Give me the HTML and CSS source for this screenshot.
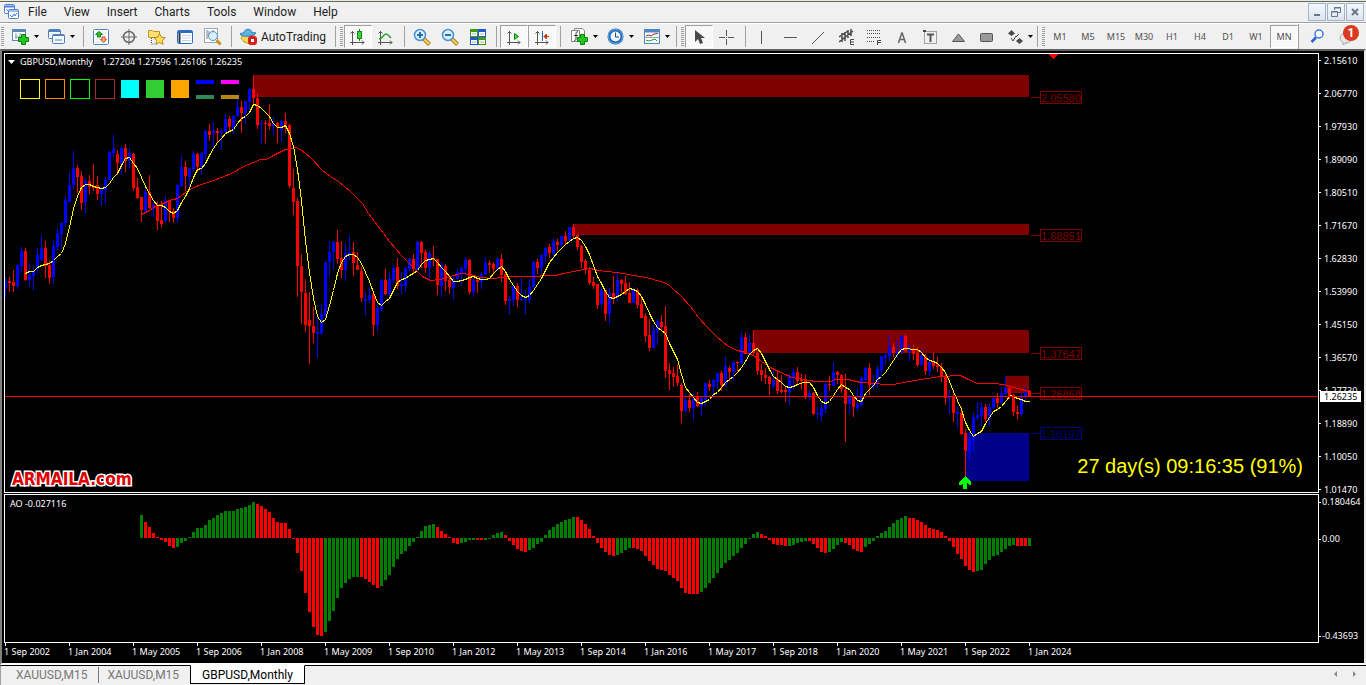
FILE: index.html
```html
<!DOCTYPE html>
<html lang="en">
<head>
<meta charset="utf-8">
<title>GBPUSD,Monthly</title>
<link rel="stylesheet" href="styles.css">
</head>
<body>
<header class="menubar">
  <svg class="menubar-logo" width="16" height="16" viewBox="0 0 16 16" fill="#fff" stroke="#4a80d8"><rect x=".5" y=".5" width="10" height="9" rx="1"/><path d="M1 2.500h9" stroke-width="2"/><rect x="4.500" y="5.500" width="10" height="9" rx="1"/><path d="M5 7h9M6 11l2 2 2-3 1 2 2-3M2 5l2 2"/></svg>
  <nav class="menus">
    <button>File</button><button>View</button><button>Insert</button><button>Charts</button><button>Tools</button><button>Window</button><button>Help</button>
  </nav>
  <div class="window-buttons">
    <button aria-label="Minimize"><svg width="12" height="12" viewBox="0 0 12 12"><path d="M3 8h6v2H3z" fill="#66788a"/></svg></button>
    <button aria-label="Restore"><svg width="12" height="12" viewBox="0 0 12 12" fill="none" stroke="#66788a"><path d="M4.500 4V1.500h6v5H8M4 2h7"/><path d="M1.500 5.500h6v5h-6zM1 6h7"/></svg></button>
    <button aria-label="Close"><svg width="12" height="12" viewBox="0 0 12 12"><path d="M3 3l6 6M9 3l-6 6" stroke="#66788a" stroke-width="2"/></svg></button>
  </div>
</header>

<div class="toolbar">
  <span class="grip"></span>
  <div class="group group-files">
    <button class="tool tool-menu" aria-label="New chart"><svg width="18" height="18" viewBox="0 0 18 18"><rect x=".5" y="1.500" width="13" height="11" fill="#fff" stroke="#5c88b4"/><path d="M1 3h12" stroke="#5c88b4" stroke-width="2"/><path d="M3 9h6M4 5v6M8 5v5" stroke="#7c98b4"/><path d="M9.500 6.500h4v3h3v4h-3v3h-4v-3h-3v-4h3z" fill="#1fc81f" stroke="#0a820a"/></svg><i class="caret"></i></button>
    <button class="tool tool-menu" aria-label="Profiles"><svg width="18" height="18" viewBox="0 0 18 18" fill="#f4f9ff" stroke="#4f7fb8"><rect x=".5" y="1.500" width="12" height="9" rx="1"/><path d="M1 3h11" stroke-width="2"/><rect x="4.500" y="6.500" width="12" height="9" rx="1"/><path d="M5 7.500h11M7 12h7"/></svg><i class="caret"></i></button>
  </div>
  <span class="sep"></span>
  <div class="group">
    <button class="tool" aria-label="Market watch"><svg width="16" height="16" viewBox="0 0 16 16"><rect x=".5" y=".5" width="15" height="15" rx="1" fill="#fff" stroke="#4f86c0"/><path d="M3 4h10M3 7h10M3 10h10M3 13h10" stroke="#cfe0ee"/><path d="M6 2.500l3.500 3H7.500V8h-3V5.500h-2z" fill="#30c030" stroke="#118011"/><path d="M10.500 13.500l3-3H12V8H9v2.500H7.500z" fill="#ffb090" stroke="#e04818"/></svg></button>
    <button class="tool" aria-label="Data window"><svg width="16" height="16" viewBox="0 0 16 16" fill="none" stroke="#666"><circle cx="8" cy="8" r="5.500" stroke-width="1.500"/><path d="M8 0v16M0 8h16"/></svg></button>
    <button class="tool" aria-label="Navigator"><svg width="18" height="16" viewBox="0 0 18 16"><path d="M.5 1.500h4l1 1h6v6H.5z" fill="#ffe070" stroke="#c49420"/><path d="M3.500 9v6h4" fill="none" stroke="#555" stroke-dasharray="1 1"/><path d="M11.500 4.500l1.800 3.700 4 .5-3 2.700.8 4-3.600-2-3.600 2 .8-4-3-2.700 4-.5z" fill="#ffe060" stroke="#b88a18"/></svg></button>
    <button class="tool" aria-label="Terminal"><svg width="16" height="16" viewBox="0 0 16 16"><rect x=".5" y="1.500" width="15" height="13" rx="1" fill="#fff" stroke="#2a6cc8"/><path d="M1 3h14" stroke="#2a6cc8" stroke-width="2"/><path d="M2.500 4v10" stroke="#334" stroke-width="2"/><path d="M5 6.500h9M5 9h9M5 11.500h9" stroke="#c3d3e6"/></svg></button>
    <button class="tool" aria-label="Strategy tester"><svg width="18" height="18" viewBox="0 0 18 18"><rect x=".5" y=".5" width="13" height="14" fill="#fff" stroke="#9aa8b4"/><path d="M3 2v9M5 3v4M9 2v4" stroke="#678"/><circle cx="9" cy="8" r="4.500" fill="#d4ecfb" fill-opacity=".85" stroke="#5790bd"/><path d="M12.500 12l4 4.500" stroke="#c8951c" stroke-width="3"/></svg></button>
  </div>
  <span class="sep"></span>
  <button class="tool tool-text"><svg width="17" height="17" viewBox="0 0 17 17"><path d="M3 7h11l1 6-5 3-6-2-3-4z" fill="#f8d850" stroke="#c8981c"/><path d="M4 5c0-5 8-5 8 0 2-1 4 0 4 0-1 3-14 5-16 1 1-1 3-1 4-1z" fill="#5fb4e4" stroke="#2a7cac"/><rect x="8" y="8" width="9" height="9" rx="3" fill="#d42020"/><rect x="11" y="11" width="3" height="3" fill="#fff"/></svg>AutoTrading</button>
  <span class="sep"></span><span class="grip"></span>
  <div class="group">
    <button class="tool pressed" aria-label="Candlesticks"><svg width="16" height="16" viewBox="0 0 16 16"><path d="M2.500 2v14M0 13.500h14M.5 4.500l2-2 2 2M12 11.500l2 2-2 2" fill="none" stroke="#555"/><path d="M9.500 0v12" stroke="#118a11"/><rect x="7.500" y="2.500" width="4" height="7" fill="#39d439" stroke="#118a11"/></svg></button>
    <button class="tool" aria-label="Line chart"><svg width="16" height="16" viewBox="0 0 16 16" fill="none" stroke="#555"><path d="M2.500 2v14M0 13.500h14M.5 4.500l2-2 2 2M12 11.500l2 2-2 2"/><path d="M1 10c4 0 4-5 7-5 2 0 3 2 5 4" stroke="#2aa52a" stroke-width="1.500"/></svg></button>
  </div>
  <span class="sep"></span>
  <div class="group">
    <button class="tool" aria-label="Zoom in"><svg width="18" height="18" viewBox="0 0 18 18"><path d="M10.500 10.500l6 6" stroke="#a87c18" stroke-width="4"/><path d="M10.500 10.500l5.500 5.500" stroke="#f8d860" stroke-width="2"/><circle cx="7" cy="7" r="5.500" fill="#d8efff" stroke="#4b93cc" stroke-width="1.500"/><path d="M4 7h6M7 4v6" stroke="#2a6cb0" stroke-width="2"/></svg></button>
    <button class="tool" aria-label="Zoom out"><svg width="18" height="18" viewBox="0 0 18 18"><path d="M10.500 10.500l6 6" stroke="#a87c18" stroke-width="4"/><path d="M10.500 10.500l5.500 5.500" stroke="#f8d860" stroke-width="2"/><circle cx="7" cy="7" r="5.500" fill="#d8efff" stroke="#4b93cc" stroke-width="1.500"/><path d="M4 7h6" stroke="#2a6cb0" stroke-width="2"/></svg></button>
    <button class="tool" aria-label="Tile windows"><svg width="16" height="16" viewBox="0 0 16 16"><path d="M0 0h8v8H0zM8 8h8v8H8z" fill="#3f9a18"/><path d="M8 0h8v8H8zM0 8h8v8H0z" fill="#2458d0"/><path d="M1 3h6v4H1zM9 3h6v4H9zM1 11h6v4H1zM9 11h6v4H9z" fill="#fff"/><path d="M2 5h4M10 5h4M2 13h4M10 13h4" stroke="#9cc0a0"/></svg></button>
  </div>
  <span class="sep"></span>
  <div class="group">
    <button class="tool pressed" aria-label="Auto scroll"><svg width="16" height="16" viewBox="0 0 16 16" fill="none" stroke="#555"><path d="M3.500 2v14M1 13.500h13M1.500 4.500l2-2 2 2M12 11.500l2 2-2 2"/><path d="M8.500 4.500v6l4-3z" fill="#3fd83f" stroke="#118a11"/></svg></button>
    <button class="tool pressed" aria-label="Chart shift"><svg width="16" height="16" viewBox="0 0 16 16" fill="none" stroke="#555"><path d="M3.500 2v14M1 13.500h13M1.500 4.500l2-2 2 2M12 11.500l2 2-2 2"/><path d="M8.500 2v10" stroke="#1c68a8"/><path d="M10 7.500h5M12.500 5L10 7.500l2.500 2.500z" fill="#c03808" stroke="#c03808"/></svg></button>
  </div>
  <span class="sep"></span>
  <div class="group">
    <button class="tool tool-menu" aria-label="Indicators"><svg width="18" height="18" viewBox="0 0 18 18"><path d="M3.500.5h8l2 2v11h-10z" fill="#fff" stroke="#888"/><path d="M.5 2.500h8v11h-8z" fill="#fff" stroke="#888"/><path d="M7 4c-2-1-2 1-2 3v4c0 1-1 2-2 1M3 7.500h4" fill="none" stroke="#333"/><path d="M9.500 6.500h4v3h3v4h-3v3h-4v-3h-3v-4h3z" fill="#1fc81f" stroke="#0a820a"/></svg><i class="caret"></i></button>
    <button class="tool tool-menu" aria-label="Periods"><svg width="18" height="18" viewBox="0 0 18 18"><circle cx="8.500" cy="8.500" r="6.500" fill="#eef6fd" stroke="#1c62b4" stroke-width="3"/><circle cx="8.500" cy="8.500" r="7" fill="none" stroke="#6fb2ea"/><path d="M8.500 4.500v4.500h3.500" fill="none" stroke="#345"/></svg><i class="caret"></i></button>
    <button class="tool tool-menu" aria-label="Templates"><svg width="18" height="18" viewBox="0 0 18 18"><rect x="1.500" y="1.500" width="15" height="14" fill="#fff" stroke="#4f86c4"/><path d="M1 3h16" stroke="#4f86c4" stroke-width="3"/><path d="M2 9.500h14" stroke="#8ab"/><path d="M3 8l3-1 2 1 3-2 4-.500" fill="none" stroke="#b02020"/><path d="M3 12l3 1 3-1 3-1 2 2" fill="none" stroke="#2a9a2a"/></svg><i class="caret"></i></button>
  </div>
  <span class="sep"></span><span class="grip"></span>
  <div class="group">
    <button class="tool pressed" aria-label="Cursor"><svg width="16" height="16" viewBox="0 0 16 16"><path d="M4 1v12l3-3 2 5 3-1-2-5h4z" fill="#4a4a4a"/></svg></button>
    <button class="tool" aria-label="Crosshair"><svg width="16" height="16" viewBox="0 0 16 16"><path d="M7.500 1v6M7.500 10v6M0 8.500h6M9 8.500h6M7 8.500h1" stroke="#555"/></svg></button>
  </div>
  <span class="sep"></span>
  <div class="group">
    <button class="tool" aria-label="Vertical line"><svg width="16" height="16" viewBox="0 0 16 16"><path d="M6.500 2v13" stroke="#555"/></svg></button>
    <button class="tool" aria-label="Horizontal line"><svg width="16" height="16" viewBox="0 0 16 16"><path d="M1 8.500h13" stroke="#555"/></svg></button>
    <button class="tool" aria-label="Trendline"><svg width="16" height="16" viewBox="0 0 16 16"><path d="M1 15L13 3" stroke="#555"/></svg></button>
    <button class="tool" aria-label="Channel"><svg width="16" height="18" viewBox="0 0 16 18" fill="none" stroke="#4a4a4a"><path d="M0 9L9 3M0 14l14-11M3 5v9M6 4v9M9 2v8M12 1v7" stroke-width="1.500"/><path d="M15 11.500h-3.500v5H15M12 14h3"/></svg></button>
    <button class="tool" aria-label="Fibonacci"><svg width="16" height="18" viewBox="0 0 16 18" fill="none" stroke="#4a4a4a"><path d="M0 2.500h14M0 5.500h14M0 9.500h14M0 13.500h8" stroke-dasharray="1 1"/><path d="M14 12.500h-3.500V17M11 14.500h3"/></svg></button>
    <button class="tool" aria-label="Text"><svg width="16" height="16" viewBox="0 0 16 16"><path d="M3.500 14L6.800 4h.4l3.300 10M5 10.500h4" fill="none" stroke="#666" stroke-width="1.500"/></svg></button>
    <button class="tool" aria-label="Text label"><svg width="16" height="16" viewBox="0 0 16 16" fill="none" stroke="#555"><path d="M1.500 2.500h12v12h-12z" stroke-dasharray="1 1"/><path d="M0 1h3v2H0z" fill="#444" stroke="none"/><path d="M4 5.500h7M7.500 5v8" stroke-width="2"/></svg></button>
    <button class="tool" aria-label="Triangle"><svg width="16" height="16" viewBox="0 0 16 16"><path d="M1.500 12.500L7.500 5l6 7.500z" fill="#999" stroke="#555"/></svg></button>
    <button class="tool" aria-label="Rectangle"><svg width="16" height="16" viewBox="0 0 16 16"><rect x="1.500" y="4.500" width="12" height="8" rx="1" fill="#999" stroke="#555"/></svg></button>
    <button class="tool tool-menu tool-arrows" aria-label="Arrows"><svg width="16" height="16" viewBox="0 0 16 16" fill="#4a4a4a"><path d="M3.500 1L7 4.500 3.500 7 0 4.500zM11.500 9l3.500 3-3.500 3L8 12z"/><path d="M3 9l2 3 3-5M8 8l3-3" fill="none" stroke="#4a4a4a"/></svg><i class="caret"></i></button>
  </div>
  <span class="sep"></span><span class="grip"></span>
  <div class="group group-periods">
    <button class="tool">M1</button><button class="tool">M5</button><button class="tool">M15</button><button class="tool">M30</button><button class="tool">H1</button><button class="tool">H4</button><button class="tool">D1</button><button class="tool">W1</button><button class="tool pressed">MN</button>
  </div>
  <div class="group group-end">
    <button class="tool" aria-label="Search"><svg width="16" height="16" viewBox="0 0 16 16" fill="none"><path d="M6 9.500L1.500 14" stroke="#2a62d0" stroke-width="2.500"/><circle cx="9" cy="6" r="4" fill="#fff" stroke="#3f78dc" stroke-width="1.500"/></svg></button>
    <button class="tool messages" aria-label="Messages"><svg width="20" height="20" viewBox="0 0 20 20"><ellipse cx="8" cy="12" rx="6" ry="5" fill="#e4e6ea" stroke="#a4a8ae"/><path d="M5 16v3l4-3" fill="#e4e6ea" stroke="#a4a8ae"/></svg><span class="badge">1</span></button>
  </div>
</div>

<main class="workspace">
  <section class="pane price-pane">
    <svg class="plot" id="price-plot" shape-rendering="crispEdges"></svg>
    <div class="chart-title"><i class="caret"></i><span>GBPUSD,Monthly</span><span>1.27204 1.27596 1.26106 1.26235</span></div>
    <div class="watermark">ARMAILA.com</div>
    <div class="countdown">27 day(s) 09:16:35 (91%)</div>
  </section>
  <aside class="price-axis">
    <ul>
      <li>2.15610</li><li>2.06770</li><li>1.97930</li><li>1.89090</li><li>1.80510</li><li>1.71670</li><li>1.62830</li><li>1.53990</li><li>1.45150</li><li>1.36570</li><li>1.27730</li><li>1.18890</li><li>1.10050</li><li>1.01470</li>
    </ul>
    <span class="current-price">1.26235</span>
  </aside>
  <section class="pane ao-pane">
    <svg class="plot" id="ao-plot" shape-rendering="crispEdges"></svg>
    <div class="ao-title">AO -0.027116</div>
  </section>
  <ul class="ao-axis"><li>0.180464</li><li>0.00</li><li>-0.43693</li></ul>
  <ol class="time-axis">
    <li>1 Sep 2002</li><li>1 Jan 2004</li><li>1 May 2005</li><li>1 Sep 2006</li><li>1 Jan 2008</li><li>1 May 2009</li><li>1 Sep 2010</li><li>1 Jan 2012</li><li>1 May 2013</li><li>1 Sep 2014</li><li>1 Jan 2016</li><li>1 May 2017</li><li>1 Sep 2018</li><li>1 Jan 2020</li><li>1 May 2021</li><li>1 Sep 2022</li><li>1 Jan 2024</li>
  </ol>
</main>

<footer class="tabs">
  <button class="tab">XAUUSD,M15</button><button class="tab">XAUUSD,M15</button><button class="tab active">GBPUSD,Monthly</button>
  <div class="tab-scroll">
    <button aria-label="Scroll left"><svg width="5" height="8" viewBox="0 0 5 8"><path d="M4 1v6L1 4z" fill="#888"/></svg></button>
    <button aria-label="Scroll right"><svg width="5" height="8" viewBox="0 0 5 8"><path d="M1 1v6l3-3z" fill="#888"/></svg></button>
  </div>
</footer>
<script src="chart.js"></script>
</body>
</html>
```

FILE: styles.css
```css
* { box-sizing: border-box; }
body {
  margin: 0;
  height: 100vh;
  display: flex;
  flex-direction: column;
  overflow: hidden;
  background: #f0f0f0;
  color: #1e1e1e;
  font: 12px/16px Roboto, "Noto Sans", sans-serif;
}
button {
  margin: 0;
  padding: 0;
  border: 0;
  background: none;
  color: inherit;
  font: inherit;
}
ul, ol { margin: 0; padding: 0; list-style: none; }
svg { flex: none; }

.menubar {
  flex: none;
  display: flex;
  align-items: center;
  height: 23px;
  padding: 2px 2px 1px 4px;
  border-bottom: 1px solid #a0a0a0;
  background: linear-gradient(#e4ecd8 0 1px, #666 1px 2px, #f0f0f0 2px);
}
.menus { display: flex; flex: 1; }
.menus button { padding: 0 9px 0 8px; }
.window-buttons { display: flex; gap: 1px; }
.window-buttons button {
  display: grid;
  place-items: center;
  width: 18px;
  height: 18px;
  border: 1px solid #a3b4c6;
  background: linear-gradient(#f4f8fc, #dbe5ef);
}

.toolbar {
  flex: none;
  display: flex;
  align-items: center;
  height: 26px;
  border-top: 1px solid #fff;
}
.grip {
  flex: none;
  width: 3px;
  height: 19px;
  margin: 0 1px;
  background: repeating-linear-gradient(#a0a0a0 0 1px, #f0f0f0 1px 2px);
}
.sep {
  flex: none;
  width: 1px;
  height: 21px;
  margin: 0 3px 0 4px;
  background: #a0a0a0;
}
.group { display: flex; }
.group-files { padding-right: 2px; }
.tool {
  display: flex;
  align-items: center;
  justify-content: center;
  width: 28px;
  height: 23px;
}
.tool.pressed {
  border: 1px solid;
  border-color: #a0a0a0 #fff #fff #a0a0a0;
  background: #f8f8f8;
}
.tool-menu { justify-content: flex-start; gap: 4px; width: 36px; padding-left: 7px; }
.tool-arrows { width: 32px; }
.tool-text { gap: 4px; width: 96px; }
.caret {
  flex: none;
  width: 5px;
  height: 3px;
  background: #000;
  clip-path: polygon(0 0, 100% 0, 50% 100%);
}
.group-periods { color: #505050; font: 9px/12px "Noto Sans", sans-serif; }
.group-end {
  flex: 1;
  justify-content: space-between;
  height: 25px;
  border-left: 1px solid #a0a0a0;
  padding: 0 4px 0 5px;
}
.messages { position: relative; }
.badge {
  position: absolute;
  top: 1px;
  right: 3px;
  width: 16px;
  height: 16px;
  border-radius: 8px;
  background: #dc3a20;
  color: #fff;
  font-weight: bold;
}

.workspace {
  flex: 1;
  min-height: 0;
  display: grid;
  grid-template-columns: 1fr 45px;
  grid-template-rows: 1fr 149px 19px;
  row-gap: 1px;
  padding: 2px 0 0 2px;
  border: 2px solid;
  border-color: #606060 #e8e8e8 #fff #808080;
  background: #000;
  color: #fff;
  font: 9px/12px "Noto Sans", sans-serif;
}
.pane {
  position: relative;
  min-width: 0;
  min-height: 0;
  overflow: hidden;
  border: 1px solid #fff;
}
.plot { display: block; position: absolute; width: 100%; height: 100%; }
.zone-label { font: 11px "Liberation Sans", sans-serif; }
.chart-title {
  position: absolute;
  top: 2px;
  left: 3px;
  display: flex;
  align-items: center;
  gap: 9px;
}
.chart-title .caret { width: 7px; height: 4px; margin-right: -4px; background: #fff; }
.watermark {
  position: absolute;
  left: 7px;
  bottom: 3px;
  color: #e00000;
  font: bold 17px/20px "DejaVu Sans Condensed", "DejaVu Sans", sans-serif;
  -webkit-text-stroke: 3px #fff;
  paint-order: stroke fill;
}
.countdown {
  position: absolute;
  right: 15px;
  bottom: 14px;
  color: #ff0;
  font: 20px/24px "Liberation Sans", Arial, sans-serif;
}
.ao-title { position: absolute; top: 3px; left: 5px; }

.price-axis { position: relative; min-height: 0; }
.price-axis ul { margin-top: -9px; }
.price-axis li { display: flex; align-items: center; gap: 3px; height: 33px; }
.price-axis li::before, .ao-axis li::before {
  content: "";
  width: 2px;
  height: 1px;
  background: #fff;
}
.current-price {
  position: absolute;
  top: 338px;
  left: 1px;
  width: 41px;
  padding-left: 4px;
  background: #fff;
  color: #000;
  line-height: 11px;
}
.ao-axis { display: flex; flex-direction: column; padding-top: 1px; white-space: nowrap; }
.ao-axis li { display: flex; align-items: center; gap: 1px; height: 14px; }
.ao-axis li:nth-child(2) { margin-top: 23px; }
.ao-axis li:last-child { margin-top: auto; }
.time-axis { grid-column: 1 / -1; display: flex; margin-top: -1px; }
.time-axis li { position: relative; flex: none; width: 64px; padding-top: 3px; white-space: nowrap; }
.time-axis li::before {
  content: "";
  position: absolute;
  top: 0;
  left: 1px;
  width: 1px;
  height: 3px;
  background: #fff;
}

.tabs {
  flex: none;
  display: flex;
  align-items: flex-start;
  height: 20px;
  padding-left: 1px;
  border-top: 1px solid #000;
  border-left: 1px solid #a0a0a0;
}
.tab { height: 18px; padding: 0 10px 0 14px; color: #777; }
.tab + .tab:not(.active) {
  height: 16px;
  margin-top: 1px;
  padding: 0 11px 0 9px;
  border-left: 1px solid #777;
}
.tab.active {
  margin-top: -1px;
  height: 19px;
  padding: 0 11px;
  border: 1px solid #000;
  border-top-color: #fff;
  background: #fff;
  color: #000;
}
.tab-scroll { display: flex; gap: 14px; margin: 0 9px 0 auto; }
```

FILE: chart.js
```js
const SVG_NS = "http://www.w3.org/2000/svg";
const FIRST_X = 5;
const STEP = 4;

// Monthly bars: colour, then high, body top, body bottom, low as chart rows.
const bars = `
b278,281,289,297 r277,281,283,292 r270,282,286,292 b264,265,286,289 b247,251,266,273
r248,251,280,281 b263,275,280,287 b267,271,276,290 b248,255,269,273 b235,248,260,261
r241,248,266,278 r261,265,278,284 b240,246,277,284 b228,233,247,250 b222,223,234,249
b196,200,223,226 b172,185,202,202 b151,168,185,189 r165,168,177,193 r171,176,203,210
b178,181,202,214 r175,181,187,194 r164,186,188,191 r176,185,194,200 b187,188,194,206
b177,180,190,204 b151,152,180,180 b135,149,153,157 r150,154,163,175 b146,148,164,175
r144,148,161,172 b148,153,161,169 r153,154,188,191 r178,187,198,199 r197,197,210,222
b188,192,211,212 r175,192,208,209 b200,205,209,217 r201,206,221,230 r201,220,224,227
b196,201,221,223 r200,200,212,222 r208,211,218,223 b184,185,218,223 b155,167,186,187
r161,167,176,191 b168,168,177,187 b151,154,169,171 r153,154,167,172 b152,153,167,175
b130,131,154,160 r124,131,135,141 b122,131,133,149 r128,131,133,143 b129,131,133,150
b114,119,132,133 r116,119,127,131 b115,116,128,134 b94,107,116,117 r101,107,113,133
b101,101,113,124 b88,89,102,110 r75,89,98,105 r93,98,125,129 b120,123,124,144
r120,123,124,143 r104,123,126,130 b117,124,126,135 r122,123,127,143 b120,121,130,142
r113,121,125,133 r124,125,186,188 r169,188,202,215 r198,201,266,297 r254,266,292,324
r279,293,325,332 r292,320,326,364 r307,326,333,343 b316,332,334,358 b304,314,333,335
b261,263,315,317 b241,252,262,277 b241,242,252,270 r230,242,259,264 r241,258,270,278
b243,253,270,281 b236,252,255,260 r242,252,263,276 r252,265,270,270 r267,271,298,302
b292,299,301,315 b287,295,300,303 r293,294,325,336 b302,308,325,332 b279,280,309,312
r269,280,294,295 b272,279,294,299 b265,268,280,283 r258,267,286,289 b272,284,286,294
b267,268,286,292 b258,259,269,271 r254,259,269,273 b241,242,270,270 r241,242,253,268
r250,252,268,273 b251,253,268,278 r246,258,260,266 r259,259,285,295 b262,265,286,297
r264,266,281,291 r275,280,287,294 b276,279,288,299 b269,272,279,283 b267,268,273,285
b257,260,269,275 r259,260,292,294 b278,280,292,297 r279,280,282,293 b272,274,282,289
b257,263,274,275 r261,263,265,273 r262,264,269,275 b257,259,269,271 r254,259,275,282
r272,274,301,305 b296,299,301,314 b285,286,300,306 r283,286,300,307 b278,299,300,301
b290,299,300,314 b279,287,300,303 b261,262,287,288 r259,262,268,274 b254,255,268,276
b247,248,256,262 r244,247,253,258 b238,241,254,259 r239,242,245,251 b235,236,245,247
r231,236,241,244 b227,227,241,242 r224,227,236,238 r235,235,247,250 r245,246,262,268
r259,261,270,274 r267,270,283,285 r277,282,286,289 r284,284,305,309 b287,290,304,308
r290,290,314,321 b288,293,314,324 r276,293,298,304 b271,280,297,301 r279,280,284,293
r276,283,294,295 r282,293,303,303 b287,290,303,303 r288,290,305,308 r296,304,318,318
r313,316,336,342 r319,335,348,351 b325,330,348,348 b319,321,331,345 r315,322,327,330
r306,326,371,378 r363,370,374,390 r367,373,377,387 r365,376,383,386 r383,385,411,423
b394,400,411,412 r394,400,408,412 b394,398,408,420 r392,397,406,407 b396,398,406,416
b383,383,400,406 r380,384,387,391 b379,380,387,398 b373,373,382,389 r371,373,385,391
b357,366,385,387 r366,368,372,381 b361,362,372,381 r361,362,363,371 b331,337,363,364
r333,337,354,354 b335,343,354,356 r330,343,353,356 r352,353,371,375 r364,370,375,381
r368,375,378,384 r376,377,384,395 b370,380,386,389 r372,379,391,394 r375,390,392,393
r386,390,392,402 b374,377,392,405 b368,372,378,390 r367,372,381,384 r374,379,381,390
r375,379,397,399 b390,393,396,401 r392,393,414,415 b407,413,414,419 b403,408,416,422
b382,384,409,413 r376,384,385,391 b362,372,386,386 r371,372,375,384 r374,375,389,393
r374,390,404,442 b395,397,404,414 r396,397,407,417 b388,404,408,411 b376,378,405,406
b367,368,380,383 r363,368,385,395 b375,384,386,390 b366,369,384,388 b356,356,370,376
b353,355,358,365 b335,347,356,361 r343,347,353,357 b340,351,354,358 b335,336,352,354
r334,336,351,353 b344,349,352,361 r345,349,354,360 r347,353,365,367 b350,355,365,366
r354,356,371,375 b357,362,371,376 r353,361,366,369 r357,365,367,372 r363,367,377,382
r374,376,398,405 b390,396,398,414 r394,397,413,422 b407,412,414,429 r407,413,434,435
r429,433,451,476 b432,439,451,460 b413,417,441,452 b402,415,418,420 b402,407,416,426
r404,407,419,422 b403,407,419,427 b397,398,408,409 r393,398,403,408 b387,393,403,404
b376,388,394,395 r387,388,396,399 r394,395,412,416 r406,412,414,419 b393,396,414,416
b388,392,397,401 r390,391,397,397`.trim().split(/\s+/);

const fastAverage = `25,273 29,271 33,271 37,267 41,265 49,263 53,260 57,256 61,253 65,243 69,227 73,208 77,196
81,187 85,184 89,184 93,186 101,188 105,187 109,183 113,177 117,173 121,165 125,158 129,157 133,163 137,168
141,177 145,186 149,193 153,200 157,205 161,205 165,207 169,211 173,213 177,210 181,202 185,196 189,188
193,177 197,169 201,168 205,163 209,155 213,148 217,142 221,138 225,133 233,129 237,123 241,118 245,116
249,112 253,104 257,105 261,108 269,116 273,123 277,127 281,127 285,125 289,133 293,146 297,169 301,200
305,240 309,272 313,298 317,316 321,322 325,319 329,305 333,290 337,273 341,262 345,256 349,254 353,254
357,257 361,263 365,272 369,281 373,292 377,302 381,305 385,301 389,298 393,290 397,282 401,279 405,278
409,275 413,273 417,270 421,264 425,260 433,258 437,262 441,267 445,271 449,276 453,281 457,281 465,279
469,277 473,276 477,278 481,279 485,279 489,278 493,273 497,269 501,266 505,271 509,279 513,285 517,291
521,295 525,297 529,295 533,290 537,284 541,278 545,270 549,262 553,257 557,252 561,248 565,244 569,241
573,238 577,237 581,240 585,246 589,254 593,265 597,276 601,283 605,291 609,297 613,298 617,296 621,294
625,291 629,288 633,289 637,291 641,296 645,304 649,313 653,321 657,327 661,330 665,333 669,343 673,351
677,359 681,374 685,387 689,392 693,397 697,402 701,403 705,401 709,399 713,394 717,392 721,387 725,382
729,379 733,376 737,372 741,367 745,361 749,354 753,350 757,348 761,353 765,361 769,369 773,376 777,379
781,382 785,386 789,387 793,386 797,384 803,382 809,382 813,387 817,395 821,401 825,403 829,401 833,395
837,389 841,384 845,387 849,389 853,395 857,400 861,401 865,393 873,385 877,379 881,376 885,372 889,366
893,360 897,354 901,349 905,348 913,349 917,349 921,352 925,357 929,360 933,361 937,363 941,367 945,372
949,381 953,391 957,400 961,409 965,422 969,430 973,436 977,433 981,431 985,423 993,411 997,409 1001,406
1005,401 1010,395 1013,396 1017,398 1021,399 1025,401 1029,401`;

const slowAverage = `141,214 145,212 149,210 153,207 157,205 161,204 169,200 177,198 185,192 193,187 201,184
213,180 221,177 233,172 243,166 253,162 260,159 266,159 273,155 285,149 295,147 300,149 310,157 322,170
330,176 338,181 350,191 362,203 368,213 377,225 389,241 401,255 413,267 422,276 430,280 440,279 450,276
460,273 470,274 480,277 493,278 500,277 512,276 537,276 543,275 555,275 563,273 573,271 583,269 590,268
598,270 607,271 623,273 633,275 640,276 650,278 663,282 668,284 673,289 680,295 690,306 698,317 707,327
717,337 728,346 737,350 745,352 753,355 761,361 770,367 780,372 792,377 803,379 815,381 830,381 835,379
848,379 860,382 875,383 883,384 893,384 903,382 915,380 927,378 940,376 960,375 968,379 977,383 995,383
1007,385 1017,388 1025,390 1030,392`;

const zones = [
  { x: 253, top: 75, bottom: 97, color: "#800000", level: 97, text: "2.05580" },
  { x: 573, top: 224, bottom: 235, color: "#800000", level: 235, text: "1.68851" },
  { x: 753, top: 330, bottom: 353, color: "#800000", level: 353, text: "1.37647" },
  { x: 1005, top: 376, bottom: 393, color: "#800000", level: 393, text: "1.26868" },
  { x: 965, top: 433, bottom: 481, color: "#00008b", level: 433, text: "1.16197" },
];
const ZONE_END = 1029;

// Awesome Oscillator runs, from bar 34 on: colour and bar heights.
const AO_START = 34;
const aoRuns = [
  ["g", 23], ["r", 16, 11, 5, 1, -2, -4, -8, -10],
  ["g", -9, -5, -3, 1, 6, 10, 10, 13, 18, 20, 23, 25, 27, 27, 27, 29, 30, 31, 33, 36],
  ["r", 34, 32, 29, 26, 20, 16, 15, 15, 9, -1, -15, -33, -55, -74, -89, -97, -98],
  ["g", -94, -83, -73, -60, -50, -45, -41, -39, -39], ["r", -39, -41, -44, -47, -50],
  ["g", -48, -42, -37, -29, -21, -16, -13, -8, -4, 1, 7, 12, 13, 14],
  ["r", 11, 7, 4, 1, -5, -6], ["g", -5, -4, -2, -2], ["r", -2, -2], ["g", -2, -1, 3, 5, 6],
  ["r", 3, -3, -7, -11, -13, -14], ["g", -12, -10, -6, -4, 3, 8, 11, 14, 16, 18, 19, 21],
  ["r", 21, 18, 14, 9, 2, -5, -10, -14, -17, -18], ["g", -17, -15, -12, -10],
  ["r", -10, -11, -13, -18, -23, -27, -31, -32, -33, -37, -40, -43, -50, -55, -56, -56, -56],
  ["g", -54, -50, -45, -40, -35, -30, -25, -22, -18, -15, -10, -6, -1, 4, 6],
  ["r", 4, 2, -2, -6, -7, -7, -8], ["g", -8, -7, -5, -4, -3], ["r", -3, -6, -10, -14, -15],
  ["g", -14, -11, -7, -4], ["r", -5, -7, -11, -13, -14],
  ["g", -9, -6, -3, 2, 5, 7, 11, 15, 18, 20, 22],
  ["r", 20, 20, 18, 16, 13, 10, 9, 8, 6, 2, -3, -9, -16, -21, -28, -32, -34],
  ["g", -33, -32, -26, -22, -18, -17, -14, -11, -8, -7], ["r", -8, -8, -8], ["g", -8],
];

function add(parent, name, attrs, text) {
  const el = document.createElementNS(SVG_NS, name);
  for (const key in attrs) el.setAttribute(key, attrs[key]);
  if (text) el.textContent = text;
  parent.appendChild(el);
  return el;
}
function rect(parent, x, y, width, height, fill) {
  return add(parent, "rect", { x, y, width, height, fill });
}

const price = add(document.getElementById("price-plot"), "g", { transform: "translate(-5 -54)" });

zones.forEach(z => rect(price, z.x, z.top, ZONE_END - z.x, z.bottom - z.top, z.color));

bars.forEach((bar, i) => {
  const color = bar[0] === "b" ? "#0000ff" : "#ff0000";
  const [high, top, bottom, low] = bar.slice(1).split(",").map(Number);
  const x = FIRST_X + STEP * i;
  rect(price, x, high, 1, low - high, color);
  rect(price, x - 1, top, 3, bottom - top, color);
});

["#ffff00", "#ff8c00", "#00ff00", "#a52a2a"].forEach((stroke, i) =>
  add(price, "path", { d: `M${20 + 25 * i} 79h20v20h-20zm1 1v18h18v-18z`, fill: stroke, "fill-rule": "evenodd" }));
["#00ffff", "#32cd32", "#ffa500"].forEach((fill, i) => rect(price, 121 + 25 * i, 80, 18, 18, fill));
[["#0000ff", "#2e8b57"], ["#ff00ff", "#b8860b"]].forEach(([top, bottom], i) => {
  rect(price, 196 + 25 * i, 80, 18, 4, top);
  rect(price, 196 + 25 * i, 95, 18, 4, bottom);
});

const lines = add(price, "g", { transform: "translate(.5 .5)", fill: "none" });
add(lines, "polyline", { points: slowAverage, stroke: "#ff0000" });
add(lines, "polyline", { points: fastAverage, stroke: "#ffff00" });

zones.forEach(z => {
  const color = z.color === "#800000" ? z.color : "#000080";
  rect(price, 1031, z.level, 9, 1, color);
  add(price, "path", { d: `M1040 ${z.level - 6}h42v13h-42zm1 1v11h40v-11z`, fill: color, "fill-rule": "evenodd" });
  add(price, "text", { x: 1041, y: z.level + 5, fill: color, class: "zone-label" }, z.text);
});

rect(price, 5, 396, "100%", 1, "#ff0000");
add(price, "path", { d: "M1048 54h10l-5 5z", fill: "#ff0000" });
add(price, "path", { d: "M965 476l6 6v3h-2l-2-2v6h-4v-6l-2 2h-2v-3z", fill: "#00ff00" });

const ao = add(document.getElementById("ao-plot"), "g", { transform: "translate(-5 -495)" });
let index = AO_START;
aoRuns.forEach(([tone, ...heights]) => heights.forEach(h => {
  rect(ao, FIRST_X + STEP * index - 1, h > 0 ? 538 - h : 538, 3, Math.abs(h), tone === "g" ? "#008000" : "#ff0000");
  index += 1;
}));
```
